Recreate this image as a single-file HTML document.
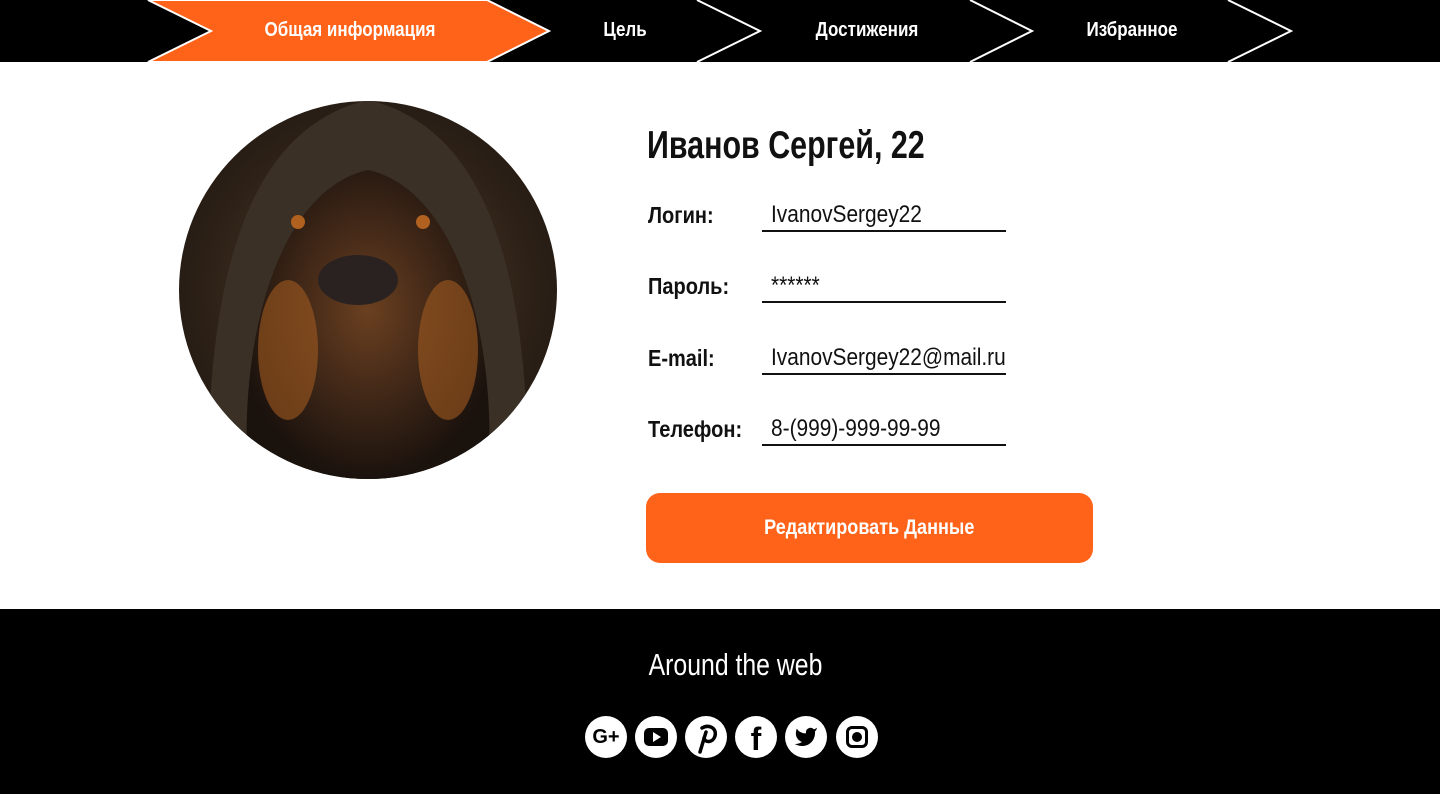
<!DOCTYPE html>
<html><head><meta charset="utf-8"><style>
*{margin:0;padding:0;box-sizing:border-box}
body{width:1440px;height:794px;background:#fff;font-family:"Liberation Sans Narrow","Liberation Sans",sans-serif;position:relative;overflow:hidden}
.nav{position:absolute;left:0;top:0;width:1440px;height:62px;background:#000}
.nav span{position:absolute;top:19px;color:#fff;font-weight:bold;font-size:20px;transform:translateX(-50%) scaleX(.85);white-space:nowrap}
.a{position:absolute;font-weight:bold;transform-origin:left;white-space:nowrap}
.lbl{position:absolute;left:648px;font-weight:bold;font-size:23px;color:#111;transform:scaleX(.87);transform-origin:left}
.val{position:absolute;left:762px;width:244px;border-bottom:2px solid #111;height:30px}
.val span{position:absolute;left:9px;top:-1px;font-size:24px;color:#111;transform:scaleX(.87);transform-origin:left;white-space:nowrap}
.btn{position:absolute;left:646px;top:493px;width:447px;height:70px;background:#ff6319;border-radius:14px;color:#fff;font-weight:bold;font-size:21px;text-align:center;line-height:70px}
.btn span{display:inline-block;transform:scaleX(.86)}
.foot{position:absolute;left:0;top:609px;width:1440px;height:185px;background:#000}
.foot h3{position:absolute;left:0;width:1471px;top:38px;text-align:center;color:#fff;font-weight:normal;font-size:31px;transform:scaleX(.8)}
.ic{position:absolute;top:107px;width:42px;height:42px;border-radius:50%;background:#fff}
</style></head><body>
<div class="nav">
<svg width="1440" height="62" style="position:absolute;left:0;top:0">
<polygon points="148,62 211,31 148,0 487,0 549,31 487,62" fill="#ff6319" stroke="#fff" stroke-width="2"/>
<polyline points="697,0 760,31 697,62" fill="none" stroke="#fff" stroke-width="2"/>
<polyline points="970,0 1032,31 970,62" fill="none" stroke="#fff" stroke-width="2"/>
<polyline points="1228,0 1291,31 1228,62" fill="none" stroke="#fff" stroke-width="2"/>
</svg>
<span style="left:350px">Общая информация</span>
<span style="left:625px">Цель</span>
<span style="left:867px">Достижения</span>
<span style="left:1132px">Избранное</span>
</div>
<svg width="380" height="380" style="position:absolute;left:178px;top:100px">
<defs><radialGradient id="g" cx="50%" cy="50%" r="55%"><stop offset="0" stop-color="#5a3a22"/><stop offset=".5" stop-color="#3a2a1c"/><stop offset="1" stop-color="#231a13"/></radialGradient>
<radialGradient id="f" cx="50%" cy="45%" r="55%"><stop offset="0" stop-color="#6b4020"/><stop offset=".6" stop-color="#3a2416"/><stop offset="1" stop-color="#1a120d"/></radialGradient>
<clipPath id="c"><circle cx="190" cy="190" r="189"/></clipPath></defs>
<circle cx="190" cy="190" r="189" fill="url(#g)"/>
<g clip-path="url(#c)">
<path d="M30 380 C30 200 60 30 190 0 C320 30 350 200 350 380Z" fill="#3a3026"/>
<path d="M70 380 C60 240 100 90 190 70 C280 90 320 240 310 380Z" fill="url(#f)"/>
<ellipse cx="110" cy="250" rx="30" ry="70" fill="#a05a20" opacity=".6"/>
<ellipse cx="270" cy="250" rx="30" ry="70" fill="#a05a20" opacity=".6"/>
<ellipse cx="180" cy="180" rx="40" ry="25" fill="#2a2220"/>
<circle cx="120" cy="122" r="7" fill="#b0601f"/><circle cx="245" cy="122" r="7" fill="#b0601f"/>
</g></svg>
<div class="a" style="left:647px;top:124px;font-size:39px;color:#111;transform:scaleX(.78)">Иванов Сергей, 22</div>
<div class="lbl" style="top:202px">Логин:</div><div class="val" style="top:202px"><span>IvanovSergey22</span></div>
<div class="lbl" style="top:273px">Пароль:</div><div class="val" style="top:273px"><span>******</span></div>
<div class="lbl" style="top:345px">E-mail:</div><div class="val" style="top:345px"><span>IvanovSergey22@mail.ru</span></div>
<div class="lbl" style="top:416px">Телефон:</div><div class="val" style="top:416px"><span>8-(999)-999-99-99</span></div>
<div class="btn"><span>Редактировать Данные</span></div>
<div class="foot"><h3>Around the web</h3>
<div class="ic" style="left:585px;font:bold 20px 'Liberation Sans',sans-serif;text-align:center;line-height:42px">G+</div>
<div class="ic" style="left:635px"><div style="position:absolute;left:9px;top:12px;width:24px;height:18px;background:#000;border-radius:5px"></div><div style="position:absolute;left:18px;top:16px;border-left:8px solid #fff;border-top:5px solid transparent;border-bottom:5px solid transparent"></div></div>
<div class="ic" style="left:685px"><svg width="42" height="42" viewBox="0 0 42 42"><path d="M17 12 C24 8 32 12 30 20 C28 27 20 27 19 22 M21 16 L15 36" fill="none" stroke="#000" stroke-width="3.5" stroke-linecap="round"/></svg></div>
<div class="ic" style="left:735px;font:bold 32px 'Liberation Sans',sans-serif;text-align:center;line-height:46px">f</div>
<div class="ic" style="left:785px"><svg width="42" height="42" viewBox="0 0 24 24"><path transform="translate(5 5) scale(.58)" d="M23 3a10.9 10.9 0 0 1-3.14 1.53 4.48 4.48 0 0 0-7.86 3v1A10.66 10.66 0 0 1 3 4s-4 9 5 13a11.64 11.64 0 0 1-7 2c9 5 20 0 20-11.5a4.5 4.5 0 0 0-.08-.83A7.72 7.72 0 0 0 23 3z"/></svg></div>
<div class="ic" style="left:836px"><div style="position:absolute;left:10px;top:10px;width:22px;height:22px;border:3px solid #000;border-radius:6px"></div><div style="position:absolute;left:16px;top:16px;width:10px;height:10px;background:#000;border-radius:50%"></div></div>
</div>
</body></html>
